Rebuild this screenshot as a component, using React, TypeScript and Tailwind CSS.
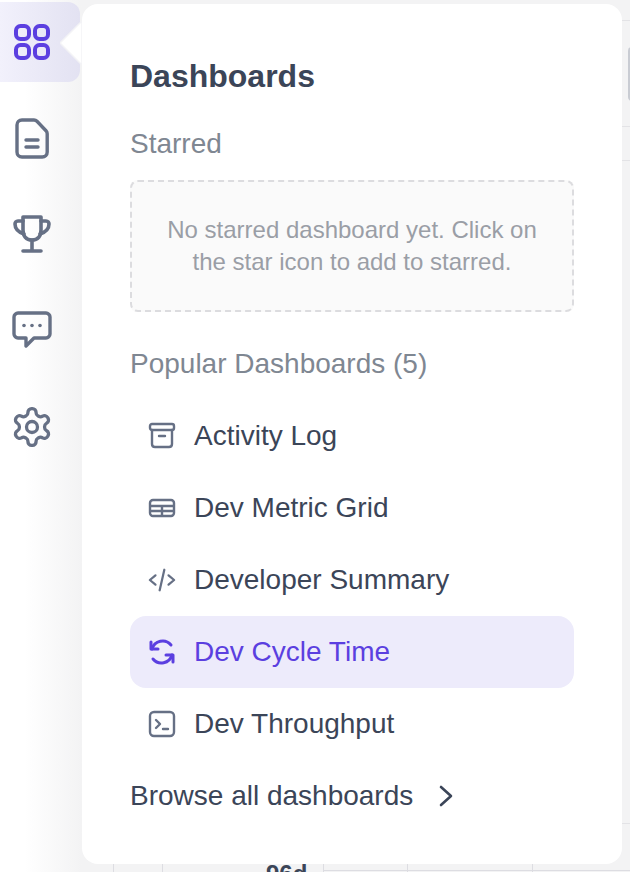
import React from "react";

function Row({ icon, label, active }: { icon: React.ReactNode; label: string; active?: boolean }) {
  return (
    <div className={`flex h-[72px] items-center rounded-2xl pl-[18px] ${active ? "bg-[#edebfb] text-[#5b3fe0]" : "text-[#3b4558]"}`}>
      <span className="flex h-[28px] w-[28px] items-center justify-center">{icon}</span>
      <span className="ml-[18px] text-[28px] leading-none">{label}</span>
    </div>
  );
}

const S = "#667085";

export default function App() {
  return (
    <div className="relative flex h-[872px] w-[630px] overflow-hidden bg-[#f3f3f4] font-['Liberation_Sans',Arial,sans-serif] antialiased">
      {/* backdrop details peeking round the panel */}
      <div className="absolute left-[622px] top-[20px] h-[1px] w-[8px] bg-[#e3e3e6]" />
      <div className="absolute left-[622px] top-[126px] h-[1px] w-[8px] bg-[#e3e3e6]" />
      <div className="absolute left-[622px] top-[160px] h-[1px] w-[8px] bg-[#e3e3e6]" />
      <div className="absolute left-[622px] top-[823px] h-[1px] w-[8px] bg-[#e3e3e6]" />
      <div className="absolute left-[628px] top-[47px] h-[54px] w-[4px] rounded-l bg-[#c9ccd3]" />
      <div className="absolute bottom-0 left-[113px] h-[8px] w-[1px] bg-[#dddde2]" />
      <div className="absolute bottom-0 left-[162px] h-[8px] w-[1px] bg-[#dddde2]" />
      <div className="absolute bottom-0 left-[323px] h-[8px] w-[1px] bg-[#dddde2]" />
      <div className="absolute bottom-0 left-[407px] h-[8px] w-[1px] bg-[#dddde2]" />
      <div className="absolute bottom-0 left-[532px] h-[8px] w-[1px] bg-[#dddde2]" />
      <div className="absolute bottom-[1px] left-[323px] h-[1px] w-[307px] bg-[#dddde2]" />
      <div className="absolute left-[266px] top-[862px] text-[24px] font-bold leading-[24px] text-[#3b4558]">96d</div>

      {/* rail */}
      <div className="relative flex h-full w-[82px] shrink-0 flex-col items-center bg-gradient-to-r from-white from-30% to-[#f3f3f4]">
        <div className="relative mt-[2px] flex h-[80px] w-[80px] items-center justify-center self-start rounded-r-xl bg-gradient-to-r from-[#f2f1fc] to-[#e3e2f2]">
          <svg width="40" height="40" viewBox="0 0 40 40" fill="none" stroke="#5b3fe0" strokeWidth="4" className="-translate-x-[8px]">
            <rect x="4" y="4" width="13" height="13" rx="4.5" />
            <rect x="23" y="4" width="13" height="13" rx="4.5" />
            <rect x="4" y="23" width="13" height="13" rx="4.5" />
            <rect x="23" y="23" width="13" height="13" rx="4.5" />
          </svg>
          <svg width="22" height="44" viewBox="0 0 22 44" className="absolute left-[60px] top-[19px]">
            <path d="M22 0 L0 22 L22 44 Z" fill="#ffffff" stroke="#f3f3f6" strokeWidth="1.5" />
          </svg>
        </div>
        <div className="mt-[36px] flex -translate-x-[9px] flex-col items-center gap-[54px]">
          <svg width="42" height="42" viewBox="0 0 42 42" fill="none" stroke={S} strokeWidth="3.4" strokeLinecap="round" strokeLinejoin="round">
            <path d="M11 2h12c1.200 0 2.200.5 3 1.300l9 9.400c.8.8 1.200 1.800 1.200 3V34c0 3-2 5-5 5H11c-3 0-5-2-5-5V7c0-3 2-5 5-5Z" />
            <path d="M15 22h12M15 29h12" />
          </svg>
          <svg width="42" height="42" viewBox="0 0 42 42" fill="none" stroke={S} strokeWidth="3.6" strokeLinecap="round" strokeLinejoin="round">
            <path d="M12 3h18v13c0 6-3 10-9 10s-9-4-9-10V3Z" />
            <path d="M12 7H7c-2 0-3 1.500-3 3 0 5 3 8 9 10M30 7h5c2 0 3 1.500 3 3 0 5-3 8-9 10" />
            <path d="M21 26v10M12 37h18" />
          </svg>
          <svg width="42" height="42" viewBox="0 0 42 42" fill="none" stroke={S} strokeWidth="3.4" strokeLinecap="round" strokeLinejoin="round">
            <path d="M7 3h28c2 0 4 2 4 4v17c0 2-2 4-4 4H23l-8 8v-8H7c-2 0-4-2-4-4V7c0-2 2-4 4-4Z" />
            <circle cx="13" cy="15.500" r="1.800" fill={S} stroke="none" />
            <circle cx="21" cy="15.500" r="1.800" fill={S} stroke="none" />
            <circle cx="29" cy="15.500" r="1.800" fill={S} stroke="none" />
          </svg>
          <svg width="44" height="44" viewBox="0 0 24 24" fill="none" stroke={S} strokeWidth="1.8" strokeLinecap="round" strokeLinejoin="round" className="-my-[1px]">
            <circle cx="12" cy="12" r="3" />
            <path d="M12.220 2h-.44a2 2 0 0 0-2 2v.18a2 2 0 0 1-1 1.730l-.43.250a2 2 0 0 1-2 0l-.15-.08a2 2 0 0 0-2.730.730l-.22.380a2 2 0 0 0 .730 2.730l.15.100a2 2 0 0 1 1 1.720v.510a2 2 0 0 1-1 1.740l-.15.090a2 2 0 0 0-.730 2.730l.22.380a2 2 0 0 0 2.730.730l.15-.08a2 2 0 0 1 2 0l.43.250a2 2 0 0 1 1 1.730V20a2 2 0 0 0 2 2h.44a2 2 0 0 0 2-2v-.18a2 2 0 0 1 1-1.730l.43-.25a2 2 0 0 1 2 0l.15.08a2 2 0 0 0 2.730-.73l.22-.39a2 2 0 0 0-.73-2.730l-.15-.08a2 2 0 0 1-1-1.740v-.5a2 2 0 0 1 1-1.740l.15-.09a2 2 0 0 0 .73-2.730l-.22-.38a2 2 0 0 0-2.730-.73l-.15.08a2 2 0 0 1-2 0l-.43-.25a2 2 0 0 1-1-1.730V4a2 2 0 0 0-2-2z" />
          </svg>
        </div>
      </div>

      {/* panel */}
      <div className="relative mt-[4px] flex h-[860px] w-[540px] shrink-0 flex-col rounded-2xl bg-white px-[48px]">
        <h1 className="mt-[54px] text-[32px] font-bold leading-[36px] text-[#3b4558]">Dashboards</h1>
        <div className="mt-[32px] text-[28px] leading-[36px] text-[#7f8792]">Starred</div>
        <div className="mt-[18px] flex h-[132px] w-[444px] items-center justify-center rounded-lg border-2 border-dashed border-[#dcdcdf] bg-[#fafafa] text-center text-[24px] leading-[32px] text-[#9a9ea6]">
          <p>No starred dashboard yet. Click on<br />the star icon to add to starred.</p>
        </div>
        <div className="mt-[34px] text-[28px] leading-[36px] text-[#7f8792]">Popular Dashboards (5)</div>
        <div className="mt-[18px] flex w-[444px] flex-col">
          <Row label="Activity Log" icon={
            <svg width="28" height="28" viewBox="0 0 28 28" fill="none" stroke={S} strokeWidth="2.4" strokeLinecap="round" strokeLinejoin="round">
              <rect x="2" y="2" width="24" height="6" rx="2" />
              <path d="M4 8v14c0 2 1 3 3 3h14c2 0 3-1 3-3V8M11 14h6" />
            </svg>} />
          <Row label="Dev Metric Grid" icon={
            <svg width="28" height="28" viewBox="0 0 28 28" fill="none" stroke={S} strokeWidth="2.400" strokeLinejoin="round">
              <rect x="2" y="6" width="24" height="16" rx="3" />
              <path d="M2 12h24M2 17h24M14 12v10" />
            </svg>} />
          <Row label="Developer Summary" icon={
            <svg width="30" height="28" viewBox="0 0 30 28" fill="none" stroke={S} strokeWidth="2.400" strokeLinecap="round" strokeLinejoin="round">
              <path d="M8 9l-6 5 6 5M22 9l6 5-6 5M17.500 3l-5 22" />
            </svg>} />
          <Row active label="Dev Cycle Time" icon={
            <svg width="28" height="28" viewBox="0 0 28 28" fill="none" stroke="#5b3fe0" strokeWidth="3" strokeLinecap="round" strokeLinejoin="round">
              <path d="M4 11a11 11 0 0 1 19-4" />
              <path d="M3 4v7h7" />
              <path d="M24 17a11 11 0 0 1-19 4" />
              <path d="M25 24v-7h-7" />
            </svg>} />
          <Row label="Dev Throughput" icon={
            <svg width="28" height="28" viewBox="0 0 28 28" fill="none" stroke={S} strokeWidth="2.400" strokeLinecap="round" strokeLinejoin="round">
              <rect x="2" y="2" width="24" height="24" rx="4" />
              <path d="M8 10l4 4-4 4M15 19h5" />
            </svg>} />
        </div>
        <div className="flex h-[72px] items-center text-[28px] text-[#3b4558]">
          <span>Browse all dashboards</span>
          <svg width="16" height="24" viewBox="0 0 16 24" fill="none" stroke="#3b4558" strokeWidth="2.600" strokeLinecap="round" strokeLinejoin="round" className="ml-[25px]">
            <path d="M3 3l10 9-10 9" />
          </svg>
        </div>
      </div>
    </div>
  );
}
